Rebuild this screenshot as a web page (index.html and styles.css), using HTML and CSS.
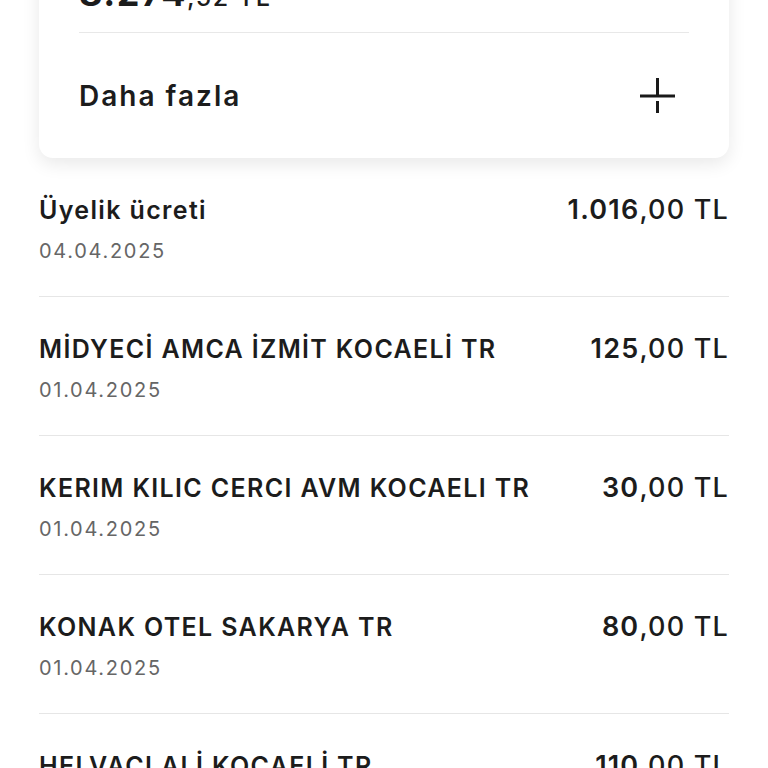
FILE: index.html
```html
<!DOCTYPE html>
<html lang="tr">
<head>
<meta charset="utf-8">
<meta name="viewport" content="width=device-width, initial-scale=1">
<title>Hesap hareketleri</title>
<link rel="stylesheet" href="styles.css">
</head>
<body>

<div class="page">
  <div class="card">
    <div class="balance"><b>8.274</b><span class="cents">,52 TL</span></div>
    <div class="more">
      <span>Daha fazla</span>
      <svg class="plus" width="36" height="36" viewBox="0 0 36 36">
        <path d="M0 18h35M17.5 0v17M17.5 23v12" stroke="#1a1a1a" stroke-width="3" fill="none"/>
      </svg>
    </div>
  </div>

  <ul class="tx-list">
    <li class="tx">
      <div class="tx-top"><span class="tx-name">Üyelik ücreti</span><span class="tx-amount"><b>1.016</b>,00 TL</span></div>
      <div class="tx-date">04.04.2025</div>
    </li>
    <li class="tx">
      <div class="tx-top"><span class="tx-name">MİDYECİ AMCA İZMİT KOCAELİ TR</span><span class="tx-amount"><b>125</b>,00 TL</span></div>
      <div class="tx-date">01.04.2025</div>
    </li>
    <li class="tx">
      <div class="tx-top"><span class="tx-name">KERIM KILIC CERCI AVM KOCAELI TR</span><span class="tx-amount"><b>30</b>,00 TL</span></div>
      <div class="tx-date">01.04.2025</div>
    </li>
    <li class="tx">
      <div class="tx-top"><span class="tx-name">KONAK OTEL SAKARYA TR</span><span class="tx-amount"><b>80</b>,00 TL</span></div>
      <div class="tx-date">01.04.2025</div>
    </li>
    <li class="tx">
      <div class="tx-top"><span class="tx-name">HELVACI ALİ KOCAELİ TR</span><span class="tx-amount"><b>110</b>,00 TL</span></div>
      <div class="tx-date">01.04.2025</div>
    </li>
  </ul>
</div>

</body>
</html>
```

FILE: styles.css
```css
body {
  margin: 0;
  background: #fff;
  font-family: Inter, "Noto Sans", sans-serif;
  color: #1c1c1c;
  overflow: hidden;
}
.page { padding: 0 39px; }

.card {
  margin-top: -27px;
  padding: 0 40px;
  background: #fff;
  border-radius: 0 0 14px 14px;
  box-shadow: 0 6px 18px rgba(0, 0, 0, 0.09);
}
.balance {
  height: 40px;
  line-height: 40px;
  font-size: 36px;
  letter-spacing: 1.5px;
  padding-bottom: 19px;
  border-bottom: 1px solid #e8e8e8;
  overflow: hidden;
}
.balance b { font-weight: 700; }
.balance .cents { font-size: 25px; font-weight: 500; }
.more {
  height: 125px;
  display: flex;
  align-items: center;
  justify-content: space-between;
  font-size: 28px;
  font-weight: 600;
  letter-spacing: 2px;
}
.plus { margin-right: 13px; }

.tx-list { list-style: none; margin: 0; padding: 0; }
.tx {
  padding: 37px 0 32px;
  border-bottom: 1px solid #e6e6e6;
}
.tx-top {
  display: flex;
  justify-content: space-between;
  align-items: center;
  height: 30px;
  line-height: 30px;
}
.tx-name { font-size: 25px; font-weight: 600; letter-spacing: 1.35px; }
.tx-amount { font-size: 27px; font-weight: 500; letter-spacing: 1.2px; }
.tx-amount b { font-weight: 600; }
.tx-date {
  margin-top: 13px;
  line-height: 26px;
  font-size: 20px;
  letter-spacing: 1.7px;
  color: #666;
}
```
